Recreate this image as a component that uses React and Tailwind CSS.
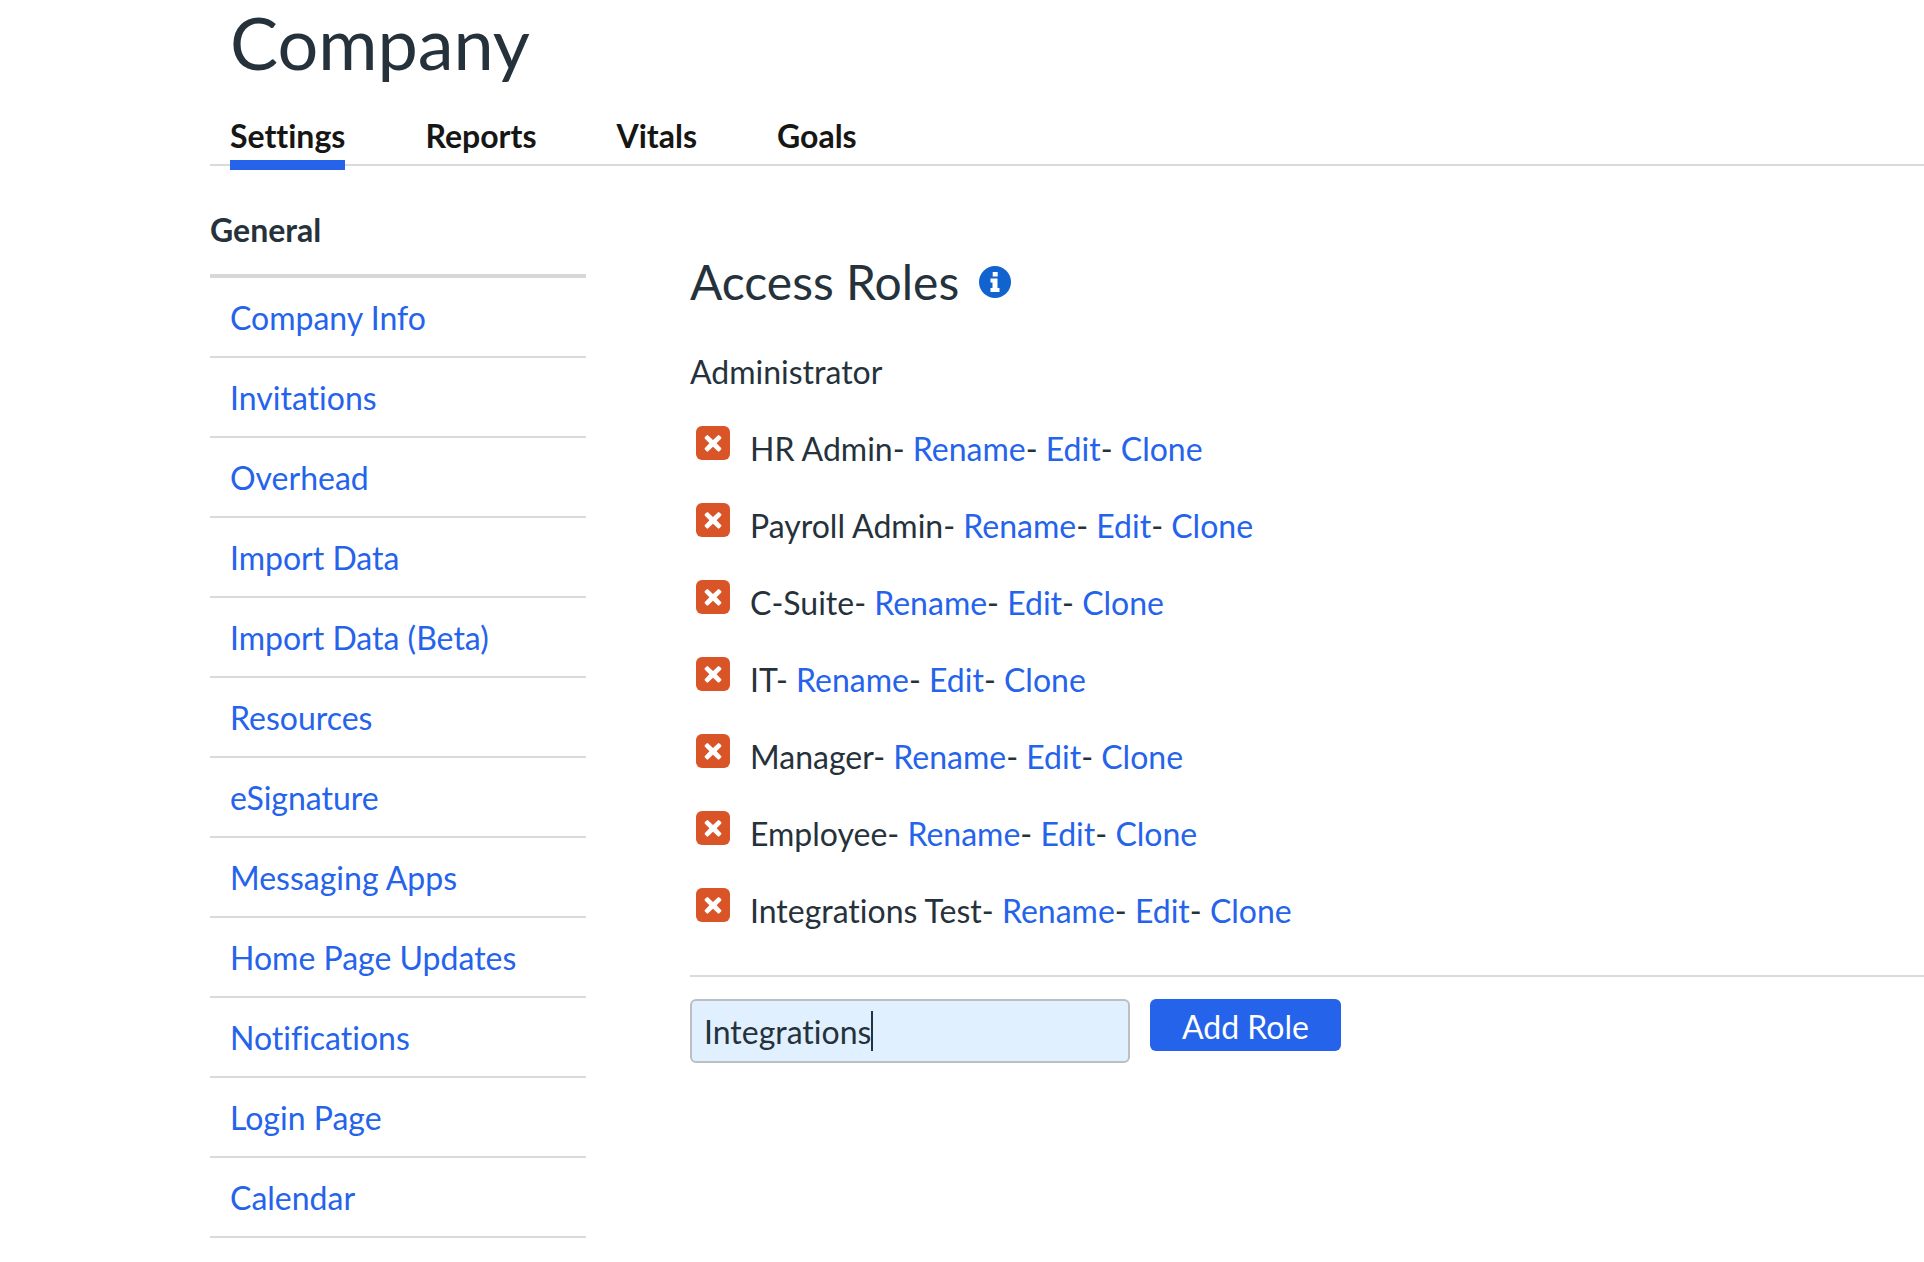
import React, { useState } from 'react';

const tabs = ['Settings', 'Reports', 'Vitals', 'Goals'];

const sections = [
  'Company Info',
  'Invitations',
  'Overhead',
  'Import Data',
  'Import Data (Beta)',
  'Resources',
  'eSignature',
  'Messaging Apps',
  'Home Page Updates',
  'Notifications',
  'Login Page',
  'Calendar',
];

const roles = ['HR Admin', 'Payroll Admin', 'C-Suite', 'IT', 'Manager', 'Employee', 'Integrations Test'];

function CrossIcon() {
  return (
    <svg viewBox="0 0 34 34" className="size-full" aria-hidden="true">
      <path
        d="M12.200 9.400l4.800 4.500 4.800-4.500q.8-.7 1.600 0l1.700 1.700q.7.800 0 1.600L20.600 17.300l4.500 4.700q.7.800 0 1.600l-1.700 1.700q-.8.700-1.600 0L17 20.800l-4.800 4.500q-.8.700-1.600 0l-1.700-1.700q-.7-.8 0-1.600l4.500-4.700-4.500-4.600q-.7-.8 0-1.600l1.700-1.700q.8-.7 1.600 0z"
        fill="#fff"
      />
    </svg>
  );
}

function InfoIcon() {
  return (
    <svg viewBox="0 0 32 32" className="size-8" aria-hidden="true">
      <circle cx="16" cy="16" r="16" fill="#1163cf" />
      <path d="M13.700 6h5v4.500h-5zM11.500 12.500h7V22h2v4h-9v-4h2v-5.500h-2z" fill="#fff" />
    </svg>
  );
}

function Tabs() {
  return (
    <nav className="flex gap-20 border-b-2 border-[#d9dadb] pl-5">
      {tabs.map((tab, i) => (
        <a
          key={tab}
          href="#"
          className={
            i === 0
              ? '-mb-1.5 border-b-10 border-[#2563eb] pb-1'
              : 'pb-2'
          }
        >
          {tab}
        </a>
      ))}
    </nav>
  );
}

function Sidebar() {
  return (
    <aside className="w-[376px] shrink-0 pt-11">
      <h2 className="border-b-4 border-[#d7d8d9] pb-6 font-bold leading-10">General</h2>
      <ul>
        {sections.map((s) => (
          <li key={s} className="flex h-20 items-center border-b-2 border-[#d9dadb] pl-5 pt-0.5">
            <a href="#" className="text-[#2563eb]">{s}</a>
          </li>
        ))}
      </ul>
    </aside>
  );
}

function RoleRow({ name }) {
  return (
    <li className="flex h-[77px] items-center pl-1.5">
      <button
        type="button"
        aria-label={`Delete ${name}`}
        className="mb-3 size-[34px] shrink-0 rounded-md bg-[#d95427]"
      >
        <CrossIcon />
      </button>
      <span className="pl-5">
        {name}- <a href="#" className="text-[#2563eb]">Rename</a>-{' '}
        <a href="#" className="text-[#2563eb]">Edit</a>-{' '}
        <a href="#" className="text-[#2563eb]">Clone</a>
      </span>
    </li>
  );
}

function AddRole() {
  const [value, setValue] = useState('Integrations');
  return (
    <form className="flex items-start gap-5 pt-[22px]" onSubmit={(e) => e.preventDefault()}>
      <div className="relative w-[440px]">
        <input
          aria-label="Role name"
          value={value}
          onChange={(e) => setValue(e.target.value)}
          className="h-16 w-full rounded-md border-2 border-[#bbbfc2] bg-[#e0f0ff] px-3 caret-transparent outline-none"
        />
        <div className="pointer-events-none absolute inset-0 flex items-center px-3.5" aria-hidden="true">
          <span className="invisible whitespace-pre">{value}</span>
          <span className="h-10 w-0.5 bg-[#26323b]" />
        </div>
      </div>
      <button type="submit" className="h-[52px] rounded-md bg-[#2563eb] px-8 pt-1 text-white">
        Add Role
      </button>
    </form>
  );
}

export default function App() {
  return (
    <div className="min-h-screen overflow-hidden bg-white pl-[210px] font-['Lato',sans-serif] text-[32px] leading-10 text-[#26323b] [font-variant-ligatures:none]">
      <h1 className="pl-5 text-7xl leading-[84px]">Company</h1>
      <div className="pt-8 font-bold text-[#161614]">
        <Tabs />
      </div>
      <div className="flex">
        <Sidebar />
        <main className="ml-[104px] min-w-0 flex-1 pt-[90px]">
          <div className="flex items-center gap-5">
            <h2 className="text-5xl leading-[52px]">Access Roles</h2>
            <button type="button" aria-label="About access roles">
              <InfoIcon />
            </button>
          </div>
          <p className="pt-11">Administrator</p>
          <ul className="border-b-2 border-[#d9dadb] pb-[26px] pt-[18px]">
            {roles.map((r) => (
              <RoleRow key={r} name={r} />
            ))}
          </ul>
          <AddRole />
        </main>
      </div>
    </div>
  );
}
